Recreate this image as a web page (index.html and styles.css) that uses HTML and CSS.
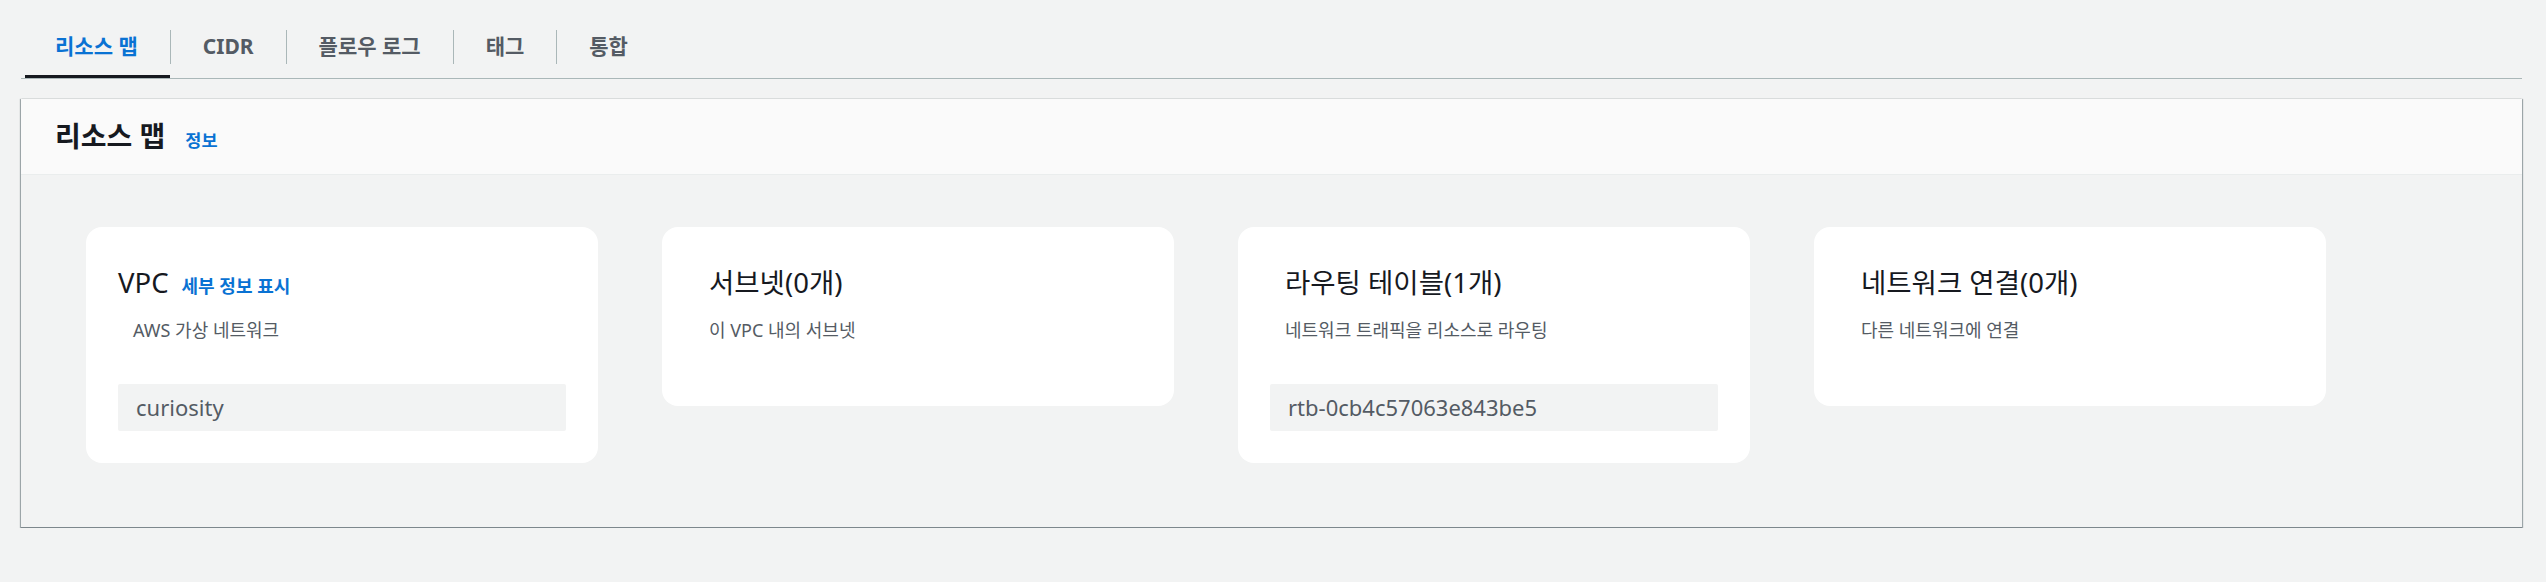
FILE: index.html
```html
<!DOCTYPE html>
<html lang="ko">
<head>
<meta charset="utf-8">
<title>리소스 맵</title>
<link rel="stylesheet" href="styles.css">
</head>
<body>
<div class="page">
  <div class="tabs">
    <div class="tab active"><span class="tab-label">리소스 맵</span></div>
    <div class="tab"><span class="tab-label sep">CIDR</span></div>
    <div class="tab"><span class="tab-label sep">플로우 로그</span></div>
    <div class="tab"><span class="tab-label sep">태그</span></div>
    <div class="tab"><span class="tab-label sep">통합</span></div>
  </div>

  <section class="panel">
    <header class="panel-header">
      <h2 class="panel-title">리소스 맵</h2>
      <a class="info-link">정보</a>
    </header>
    <div class="panel-body">
      <div class="cards">
        <div class="card">
          <div class="card-title">VPC<a class="details-link">세부 정보 표시</a></div>
          <div class="card-desc indent">AWS 가상 네트워크</div>
          <div class="card-item">curiosity</div>
        </div>
        <div class="card">
          <div class="card-title indent">서브넷(0개)</div>
          <div class="card-desc indent">이 VPC 내의 서브넷</div>
        </div>
        <div class="card">
          <div class="card-title indent">라우팅 테이블(1개)</div>
          <div class="card-desc indent">네트워크 트래픽을 리소스로 라우팅</div>
          <div class="card-item">rtb-0cb4c57063e843be5</div>
        </div>
        <div class="card">
          <div class="card-title indent">네트워크 연결(0개)</div>
          <div class="card-desc indent">다른 네트워크에 연결</div>
        </div>
      </div>
    </div>
  </section>
</div>
</body>
</html>
```

FILE: styles.css
```css
* { box-sizing: border-box; }

html, body {
  margin: 0;
  padding: 0;
  background: #f2f3f3;
  font-family: "Noto Sans", "Noto Sans CJK KR", sans-serif;
  color: #16191f;
}

.page {
  padding: 0 24px 0 21px;
}

/* Tabs */
.tabs {
  display: flex;
  padding-left: 4px;
  border-bottom: 1px solid #aab7b8;
}

.tab {
  padding-top: 30px;
  padding-bottom: 11px;
  border-bottom: 3px solid transparent;
  font-size: 21px;
  font-weight: 700;
  color: #545b64;
}

.tab.active {
  border-bottom-color: #16191f;
  color: #0972d3;
}

.tab-label {
  display: block;
  height: 34px;
  line-height: 33px;
  padding: 0 32px 0 30px;
}

.tab-label.sep {
  border-left: 1px solid #aab7b8;
  padding-left: 32px;
}

/* Panel */
.panel {
  margin-top: 20px;
  background: #f2f3f3;
  border-bottom: 1px solid #7d878c;
  box-shadow: 0 1px 1px 0 rgba(0, 28, 36, 0.45),
              1px 0 1px 0 rgba(0, 28, 36, 0.3),
              -1px 0 1px 0 rgba(0, 28, 36, 0.3);
}

.panel-header {
  display: flex;
  align-items: baseline;
  height: 76px;
  padding: 19px 20px 0 34px;
  background: #fafafa;
  border-bottom: 1px solid #eaeded;
}

.panel-title {
  margin: 0;
  font-size: 28px;
  line-height: 36px;
  font-weight: 700;
  color: #16191f;
}

.info-link {
  margin-left: 20px;
  font-size: 17.5px;
  font-weight: 700;
  color: #0972d3;
}

.panel-body {
  padding: 52px 64px 64px 65px;
}

.cards {
  display: flex;
  align-items: flex-start;
  gap: 64px;
}

.card {
  width: 512px;
  padding: 32px;
  background: #ffffff;
  border-radius: 16px;
}

.card-title {
  height: 48px;
  font-size: 27.5px;
  line-height: 48px;
  font-weight: 400;
  color: #16191f;
}

.details-link {
  margin-left: 13px;
  font-size: 18px;
  line-height: 1;
  font-weight: 700;
  color: #0972d3;
}

.indent {
  padding-left: 15px;
}

.card-desc {
  margin-top: 11px;
  margin-bottom: 32px;
  font-size: 18px;
  line-height: 24px;
  color: #545b64;
}

.card-item {
  margin-top: 42px;
  height: 47px;
  line-height: 47px;
  padding: 0 18px;
  background: #f2f3f3;
  border-radius: 2px;
  font-size: 22px;
  color: #545b64;
}
```
